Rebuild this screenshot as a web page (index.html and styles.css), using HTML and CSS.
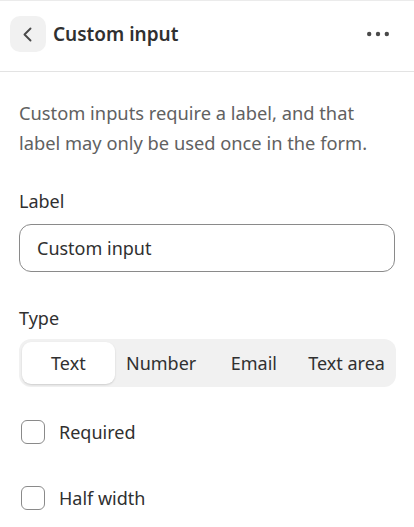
FILE: index.html
```html
<!DOCTYPE html>
<html lang="en">
<head>
<meta charset="utf-8">
<link rel="stylesheet" href="styles.css">
</head>
<body>
<div class="panel">
  <header class="header">
    <button class="back" aria-label="Back">
      <svg width="20" height="20" viewBox="0 0 20 20"><path d="M12.5 4.5L6.5 10.5l6 6" fill="none" stroke="#4a4a4a" stroke-width="1.9" stroke-linecap="round" stroke-linejoin="round"/></svg>
    </button>
    <h1 class="title">Custom input</h1>
    <button class="more" aria-label="More">
      <svg width="22" height="6" viewBox="0 0 22 6"><circle cx="2.2" cy="3" r="2.2" fill="#4a4a4a"/><circle cx="11" cy="3" r="2.2" fill="#4a4a4a"/><circle cx="19.8" cy="3" r="2.2" fill="#4a4a4a"/></svg>
    </button>
  </header>
  <main class="content">
    <p class="desc">Custom inputs require a label, and that label may only be used once in the form.</p>
    <div class="field">
      <label class="label">Label</label>
      <div class="input">Custom input</div>
    </div>
    <div class="field type-field">
      <div class="label">Type</div>
      <div class="segmented">
        <div class="seg active">Text</div>
        <div class="seg">Number</div>
        <div class="seg">Email</div>
        <div class="seg">Text area</div>
      </div>
    </div>
    <div class="check first"><span class="box"></span><span>Required</span></div>
    <div class="check second"><span class="box"></span><span>Half width</span></div>
  </main>
</div>
</body>
</html>
```
FILE: styles.css
```css
* { box-sizing: border-box; }
html, body { margin: 0; padding: 0; background: #fff; }
body {
  font-family: "Noto Sans", "Open Sans", sans-serif;
  color: #303030;
  font-size: 18px;
}
.panel { width: 414px; }
.header {
  display: flex;
  align-items: center;
  border-top: 1px solid #ebebeb;
  border-bottom: 1px solid #e3e3e3;
  padding: 15px 25px 19px 10px;
  height: 72px;
}
.back {
  width: 36px; height: 36px;
  border: none; border-radius: 10px;
  background: #f1f1f1;
  display: flex; align-items: center; justify-content: center;
  padding: 0;
}
.title {
  margin: 0 0 0 7px;
  font-size: 19px;
  font-weight: 600;
  color: #303030;
  flex: 1;
}
.more {
  border: none; background: none; padding: 0;
  display: flex; align-items: center;
}
.content { padding: 26px 19px 0 19px; }
.desc {
  margin: 0;
  max-width: 350px;
  font-size: 18.3px;
  line-height: 30px;
  color: #616161;
}
.field { margin-top: 31px; }
.type-field { margin-top: 34px; }
.label { display: block; line-height: 24px; }
.input {
  margin-top: 11px;
  height: 48px;
  border: 1px solid #8a8a8a;
  border-radius: 12px;
  padding: 0 17px;
  display: flex; align-items: center;
  color: #303030;
}
.segmented {
  margin-top: 9px;
  height: 48px;
  background: #f1f1f1;
  border-radius: 12px;
  padding: 3px;
  display: grid;
  grid-template-columns: repeat(4, 1fr);
  width: 377px;
}
.seg {
  display: flex; align-items: center; justify-content: center;
  border-radius: 9px;
  color: #303030;
}
.seg.active {
  background: #fff;
  box-shadow: 0 1px 2px rgba(0,0,0,0.15);
}
.check {
  display: flex; align-items: center;
  height: 24px;
  padding-left: 2px;
}
.check.first { margin-top: 33px; }
.check.second { margin-top: 42px; }
.box {
  width: 24px; height: 24px;
  border: 1px solid #8a8a8a;
  border-radius: 6px;
  margin-right: 14px;
}
```
